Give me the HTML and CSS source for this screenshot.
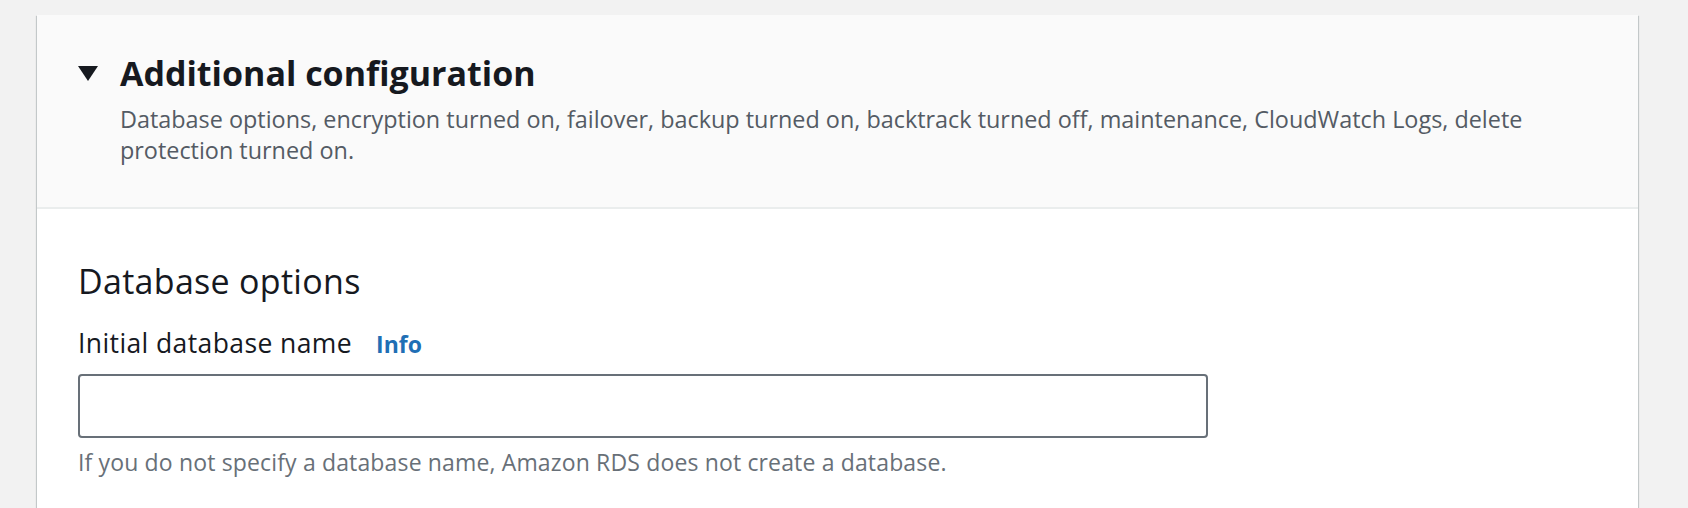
FILE: index.html
```html
<!DOCTYPE html>
<html lang="en">
<head>
<meta charset="utf-8">
<title>Additional configuration</title>
<link rel="stylesheet" href="styles.css">
</head>
<body>
<div class="page">
  <section class="panel">
    <header class="panel-header">
      <div class="caret">
        <svg width="20" height="15" viewBox="0 0 20 15" aria-hidden="true"><polygon points="0,0 20,0 10,15" fill="#16191f"/></svg>
      </div>
      <div class="header-text">
        <h2 class="title">Additional configuration</h2>
        <p class="desc">Database options, encryption turned on, failover, backup turned on, backtrack turned off, maintenance, CloudWatch Logs, delete protection turned on.</p>
      </div>
    </header>
    <div class="panel-body">
      <h3 class="section-title">Database options</h3>
      <div class="field">
        <div class="label-row">
          <label class="label" for="dbname">Initial database name</label>
          <a class="info" href="#">Info</a>
        </div>
        <input class="text-input" id="dbname" type="text">
        <p class="help">If you do not specify a database name, Amazon RDS does not create a database.</p>
      </div>
    </div>
  </section>
</div>
</body>
</html>
```

FILE: styles.css
```css
html, body {
  margin: 0;
  padding: 0;
  background: #f2f2f2;
  font-family: "Open Sans", Roboto, Arial, sans-serif;
  color: #16191f;
}

.page {
  padding: 15px 50px 0 37px;
}

.panel {
  background: #ffffff;
  box-shadow: 0 1px 1px 0 rgba(0, 28, 36, 0.3), 1px 1px 1px 0 rgba(0, 28, 36, 0.15), -1px 1px 1px 0 rgba(0, 28, 36, 0.15);
}

.panel-header {
  display: flex;
  align-items: flex-start;
  background: #fafafa;
  border-bottom: 2px solid #eaeded;
  padding: 38px 41px 41px 41px;
}

.caret {
  width: 42px;
  flex: none;
  padding-top: 13px;
}

.caret svg {
  display: block;
}

.header-text {
  flex: 1;
}

.title {
  margin: 0;
  font-size: 34px;
  line-height: 40px;
  font-weight: 700;
  color: #16191f;
}

.desc {
  margin: 11px 0 0 0;
  font-size: 23.4px;
  line-height: 31px;
  color: #545b64;
}

.panel-body {
  padding: 52px 41px 80px 41px;
}

.section-title {
  margin: 0;
  font-size: 34px;
  line-height: 40px;
  letter-spacing: 0.3px;
  font-weight: 400;
  color: #16191f;
}

.field {
  margin-top: 26px;
}

.label-row {
  display: flex;
  align-items: baseline;
  gap: 24px;
}

.label {
  font-size: 26.5px;
  line-height: 32px;
  letter-spacing: 0.4px;
  color: #16191f;
}

.info {
  font-size: 23px;
  line-height: 32px;
  font-weight: 700;
  color: #1f6fb5;
  text-decoration: none;
}

.text-input {
  display: block;
  box-sizing: border-box;
  width: 1130px;
  height: 64px;
  margin: 14px 0 0 0;
  border: 2px solid #687078;
  border-radius: 4px;
  background: #ffffff;
  font-family: inherit;
  font-size: 22px;
  padding: 0 16px;
}

.help {
  margin: 9px 0 0 0;
  font-size: 23px;
  line-height: 31px;
  letter-spacing: 0.15px;
  color: #687078;
}
```
